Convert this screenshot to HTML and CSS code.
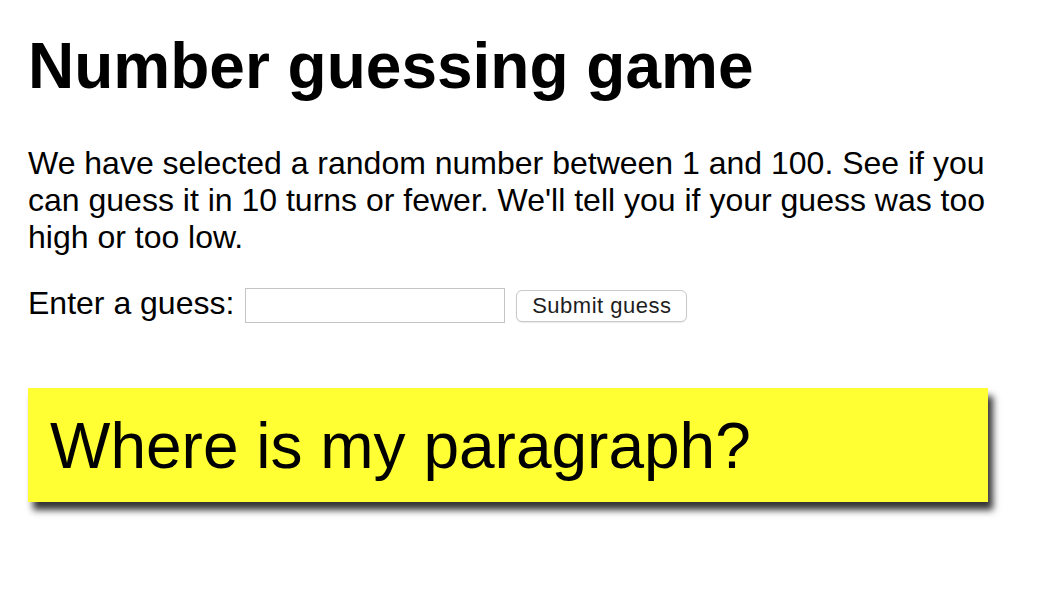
FILE: index.html
```html
<!DOCTYPE html>
<html lang="en">
<head>
<meta charset="utf-8">
<title>Number guessing game</title>
<link rel="stylesheet" href="styles.css">
</head>
<body>
<main class="page">
  <h1 class="title">Number guessing game</h1>
  <p class="intro">We have selected a random number between 1 and 100. See if you can guess it in 10 turns or fewer. We'll tell you if your guess was too high or too low.</p>
  <div class="form">
    <label class="label" for="guessField">Enter a guess:</label>
    <input class="field" type="text" id="guessField">
    <button class="submit" type="button">Submit guess</button>
  </div>
  <p class="note">Where is my paragraph?</p>
</main>
</body>
</html>
```

FILE: styles.css
```css
html, body {
  margin: 0;
  padding: 0;
  background: #fff;
}

body {
  font-family: "Liberation Sans", Arial, Helvetica, sans-serif;
  font-size: 32px;
  color: #000;
}

.page {
  width: 960px;
  padding: 29px 0 90px 28px;
}

.title {
  font-size: 64px;
  font-weight: bold;
  line-height: normal;
  margin: 0 0 42px;
}

.intro {
  margin: 0 0 32px;
  line-height: normal;
}

.form {
  display: flex;
  align-items: center;
  height: 35px;
}

.label {
  padding-bottom: 4px;
  margin-right: 11px;
  line-height: normal;
}

.field {
  box-sizing: border-box;
  width: 260px;
  height: 35px;
  border: 1px solid #c4c4c4;
  background: #fff;
  margin: 0 11px 0 0;
  padding: 0 4px;
  font-size: 22px;
}

.submit {
  box-sizing: border-box;
  width: 171px;
  height: 32px;
  margin: 1px 0 0;
  padding: 0 0 1px;
  border: 1px solid #c9c9c9;
  border-radius: 6px;
  background: #fff;
  box-shadow: 0 1px 1px rgba(0, 0, 0, 0.08);
  font-family: "Liberation Sans", Arial, Helvetica, sans-serif;
  font-size: 22px;
  letter-spacing: 0.5px;
  color: #1e1e1e;
}

.note {
  margin: 65px 0 0;
  padding: 21px 22px 19px;
  background: #ffff33;
  font-size: 64px;
  line-height: normal;
  box-shadow: 5px 8px 7px rgba(0, 0, 0, 0.8);
}
```
